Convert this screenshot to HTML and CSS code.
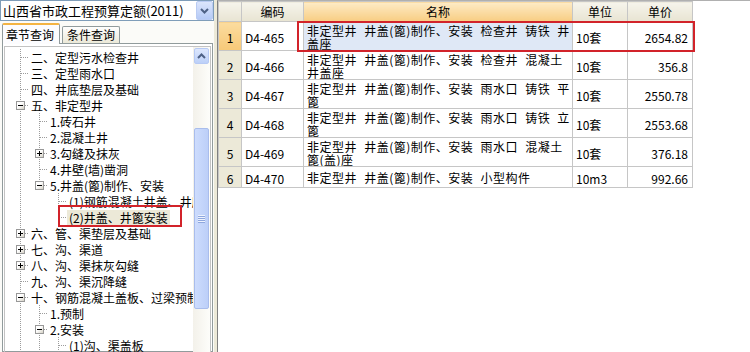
FILE: index.html
```html
<!DOCTYPE html>
<html lang="zh-CN">
  <head>
    <meta charset="UTF-8" />
    <title>定额章节查询</title>
    <link rel="stylesheet" href="styles.css">
  </head>
  <body>
    <div class="app">
      <div class="left">
        <div class="combo">
          <span class="combo-text">山西省市政工程预算定额(2011)</span>
          <span class="combo-btn">
            <svg width="9" height="6" viewBox="0 0 9 6"><polyline points="1,1 4.5,4.5 8,1" fill="none" stroke="#4d6185" stroke-width="2"/></svg>
          </span>
        </div>
        <div class="tabs">
          <span class="tab active">章节查询</span>
          <span class="tab">条件查询</span>
        </div>
        <div class="pane">
          <div class="tree">
            <div class="nodes">
              <div class="row"><i class="g t"></i><span class="lbl">二、定型污水检查井</span></div>
              <div class="row"><i class="g t"></i><span class="lbl">三、定型雨水口</span></div>
              <div class="row"><i class="g t"></i><span class="lbl">四、井底垫层及基础</span></div>
              <div class="row"><i class="g t"><b class="box minus"></b></i><span class="lbl">五、非定型井</span></div>
              <div class="row"><i class="g v"></i><i class="g t"></i><span class="lbl">1.砖石井</span></div>
              <div class="row"><i class="g v"></i><i class="g t"></i><span class="lbl">2.混凝土井</span></div>
              <div class="row"><i class="g v"></i><i class="g t"><b class="box plus"></b></i><span class="lbl">3.勾缝及抹灰</span></div>
              <div class="row"><i class="g v"></i><i class="g t"></i><span class="lbl">4.井壁(墙)凿洞</span></div>
              <div class="row"><i class="g v"></i><i class="g l"><b class="box minus"></b></i><span class="lbl">5.井盖(篦)制作、安装</span></div>
              <div class="row"><i class="g v"></i><i class="g"></i><i class="g t"></i><span class="lbl">(1)钢筋混凝土井盖、井座</span></div>
              <div class="row picked"><i class="g v"></i><i class="g"></i><i class="g l"></i><span class="lbl sel">(2)井盖、井篦安装</span><span class="mark"></span></div>
              <div class="row"><i class="g t"><b class="box plus"></b></i><span class="lbl">六、管、渠垫层及基础</span></div>
              <div class="row"><i class="g t"><b class="box plus"></b></i><span class="lbl">七、沟、渠道</span></div>
              <div class="row"><i class="g t"><b class="box plus"></b></i><span class="lbl">八、沟、渠抹灰勾缝</span></div>
              <div class="row"><i class="g t"></i><span class="lbl">九、沟、渠沉降缝</span></div>
              <div class="row"><i class="g t"><b class="box minus"></b></i><span class="lbl">十、钢筋混凝土盖板、过梁预制</span></div>
              <div class="row"><i class="g v"></i><i class="g t"></i><span class="lbl">1.预制</span></div>
              <div class="row"><i class="g v"></i><i class="g t"><b class="box minus"></b></i><span class="lbl">2.安装</span></div>
              <div class="row"><i class="g v"></i><i class="g v"></i><i class="g t"></i><span class="lbl">(1)沟、渠盖板</span></div>
            </div>
            <div class="sbar">
              <span class="sb-btn">
                <svg width="9" height="6" viewBox="0 0 9 6"><polyline points="1,5 4.5,1.5 8,5" fill="none" stroke="#4d6185" stroke-width="2"/></svg>
              </span>
              <span class="sb-thumb"><i></i></span>
            </div>
          </div>
        </div>
      </div>
      <div class="split"></div>
      <div class="right">
        <table class="grid">
          <colgroup>
            <col class="c-no"><col class="c-code"><col class="c-name"><col class="c-unit"><col class="c-price">
          </colgroup>
          <thead>
            <tr><th></th><th>编码</th><th class="sorted">名称</th><th>单位</th><th>单价</th></tr>
          </thead>
          <tbody>
            <tr class="cur"><td class="no">1</td><td>D4-465</td><td class="name">非定型井 井盖(篦)制作、安装 检查井 铸铁 井<br>盖座</td><td>10套</td><td class="num">2654.82</td></tr>
            <tr><td class="no">2</td><td>D4-466</td><td class="name">非定型井 井盖(篦)制作、安装 检查井 混凝土<br>井盖座</td><td>10套</td><td class="num">356.8</td></tr>
            <tr><td class="no">3</td><td>D4-467</td><td class="name">非定型井 井盖(篦)制作、安装 雨水口 铸铁 平<br>篦</td><td>10套</td><td class="num">2550.78</td></tr>
            <tr><td class="no">4</td><td>D4-468</td><td class="name">非定型井 井盖(篦)制作、安装 雨水口 铸铁 立<br>篦</td><td>10套</td><td class="num">2553.68</td></tr>
            <tr><td class="no">5</td><td>D4-469</td><td class="name">非定型井 井盖(篦)制作、安装 雨水口 混凝土<br>篦(盖)座</td><td>10套</td><td class="num">376.18</td></tr>
            <tr class="single"><td class="no">6</td><td>D4-470</td><td class="name">非定型井 井盖(篦)制作、安装 小型构件</td><td>10m3</td><td class="num">992.66</td></tr>
          </tbody>
        </table>
        <div class="row-mark"></div>
      </div>
    </div>
  </body>
</html>
```

FILE: styles.css
```css
body {
  margin: 0;
  font-family: "Noto Sans CJK SC", sans-serif;
  font-size: 12px;
  color: #000;
  background: #fff;
}

.app {
  display: flex;
  width: 750px;
  height: 352px;
  overflow: hidden;
}

/* left side: combo, tabs, tree */
.left {
  width: 214px;
  flex: none;
  display: flex;
  flex-direction: column;
  background: #fbfbf8;
}

.combo {
  height: 19px;
  border: 1px solid #7f9db9;
  background: #fff;
  display: flex;
  align-items: center;
  padding-left: 2px;
}

.combo-text {
  flex: 1;
  font-size: 13px;
  line-height: 19px;
}

.combo-btn {
  width: 15px;
  height: 17px;
  border: 1px solid #b9cbf3;
  border-radius: 2px;
  background: linear-gradient(#dbe5fc, #b5caf6);
  display: flex;
  align-items: center;
  justify-content: center;
}

.tabs {
  height: 22px;
  display: flex;
  align-items: flex-end;
  padding-left: 2px;
}

.tab {
  height: 16px;
  line-height: 16px;
  padding: 0 4px;
  margin-right: 2px;
  border: 1px solid #919b9c;
  border-bottom: none;
  border-radius: 2px 2px 0 0;
  background: linear-gradient(#fefefe, #ece9d8);
}

.tab.active {
  height: 19px;
  line-height: 19px;
  padding: 0 5px 0 3px;
  border-top: 2px solid #f4b443;
  background: #fcfcfe;
  margin-bottom: -1px;
  position: relative;
}

.pane {
  flex: 1;
  margin: 0 1px 0 2px;
  border: 1px solid #919b9c;
  background: #fff;
  padding: 2px 1px 0 1px;
  min-height: 0;
}

.tree {
  height: 100%;
  display: flex;
  border: 1px solid #c3c3c3;
  border-bottom: none;
}

.nodes {
  flex: 1;
  overflow: hidden;
  padding: 2px 0 0 5px;
}

.row {
  display: flex;
  align-items: center;
  height: 16px;
  white-space: nowrap;
}

.row.picked {
  position: relative;
}

.g {
  width: 19px;
  height: 16px;
  flex: none;
}

.g.v {
  background: repeating-linear-gradient(#9c9c9c 0 1px, transparent 1px 2px) 10px 0 / 1px 100% no-repeat;
}

.g.t {
  background:
    repeating-linear-gradient(to right, #9c9c9c 0 1px, transparent 1px 2px) 11px 8px / 8px 1px no-repeat,
    repeating-linear-gradient(#9c9c9c 0 1px, transparent 1px 2px) 10px 0 / 1px 100% no-repeat;
}

.g.l {
  background:
    repeating-linear-gradient(to right, #9c9c9c 0 1px, transparent 1px 2px) 11px 8px / 8px 1px no-repeat,
    repeating-linear-gradient(#9c9c9c 0 1px, transparent 1px 2px) 10px 0 / 1px 9px no-repeat;
}

.box {
  display: block;
  width: 9px;
  height: 9px;
  box-sizing: border-box;
  margin: 4px 0 0 6px;
  border: 1px solid #989898;
}

.box.minus {
  background:
    linear-gradient(#000, #000) center / 5px 1px no-repeat,
    linear-gradient(135deg, #fff 40%, #d6d2c6);
}

.box.plus {
  background:
    linear-gradient(#000, #000) center / 5px 1px no-repeat,
    linear-gradient(#000, #000) center / 1px 5px no-repeat,
    linear-gradient(135deg, #fff 40%, #d6d2c6);
}

.lbl {
  padding: 0 2px;
  line-height: 15px;
}

.lbl.sel {
  background: #ece9d8;
}

.mark {
  position: absolute;
  left: 48px;
  top: -4px;
  width: 120px;
  height: 18px;
  border: 2px solid #d2232a;
}

.sbar {
  width: 17px;
  flex: none;
  display: flex;
  flex-direction: column;
  align-items: center;
  background: linear-gradient(to right, #f3f1ea, #fdfdfa);
}

.sb-btn {
  width: 13px;
  height: 14px;
  margin-top: 1px;
  border: 1px solid #b7caf4;
  border-radius: 2px;
  background: linear-gradient(#dde7fd, #bcd0f8);
  display: flex;
  align-items: center;
  justify-content: center;
}

.sb-thumb {
  width: 13px;
  height: 179px;
  margin-top: 64px;
  border: 1px solid #a9bdec;
  border-radius: 2px;
  background: linear-gradient(to right, #cddcfd, #bccff8);
  display: flex;
  align-items: center;
  justify-content: center;
}

.sb-thumb i {
  width: 7px;
  height: 8px;
  background: repeating-linear-gradient(#eef3fe 0 1px, #8ea7de 1px 2px);
}

.split {
  width: 3px;
  flex: none;
  background: #ece9d8;
}

/* right side: item grid */
.right {
  flex: 1;
  position: relative;
  border-left: 1px solid #808080;
  border-top: 1px solid #b0b0b0;
  background: #fff;
}

.grid {
  border-collapse: collapse;
  table-layout: fixed;
  width: 474px;
}

.c-no { width: 23px; }
.c-code { width: 62px; }
.c-name { width: 269px; }
.c-unit { width: 55px; }
.c-price { width: 65px; }

.grid th,
.grid td {
  border: 1px solid #c6c6c6;
  padding: 0 3px;
  white-space: nowrap;
  overflow: hidden;
  font-weight: normal;
}

.grid tr {
  height: 29px;
}

.grid thead tr {
  height: 20px;
}

.grid tr.single {
  height: 20px;
}

.grid th {
  text-align: center;
  background: linear-gradient(#f6f4ec, #e8e4d2);
}

.grid th.sorted {
  background: linear-gradient(#fdebc6, #f8cd82);
}

.grid td {
  vertical-align: middle;
  padding-top: 3px;
}

.grid td.no {
  text-align: center;
  padding: 3px 0 0;
  background: #ece9d8;
}

.grid tr.cur td.no {
  background: linear-gradient(#fbdc9f, #f7c978);
}

.grid td.name {
  vertical-align: top;
  line-height: 13px;
  padding-top: 2px;
  letter-spacing: 0.5px;
  word-spacing: 4px;
}

.grid tr.single td.name {
  vertical-align: middle;
  padding-top: 1px;
}

.grid tr.cur td.name {
  background: #dfe8f6;
}

.grid td.num {
  text-align: right;
  padding-right: 4px;
}

.row-mark {
  position: absolute;
  left: 79px;
  top: 20px;
  width: 394px;
  height: 27px;
  border: 2px solid #d2232a;
}
```
